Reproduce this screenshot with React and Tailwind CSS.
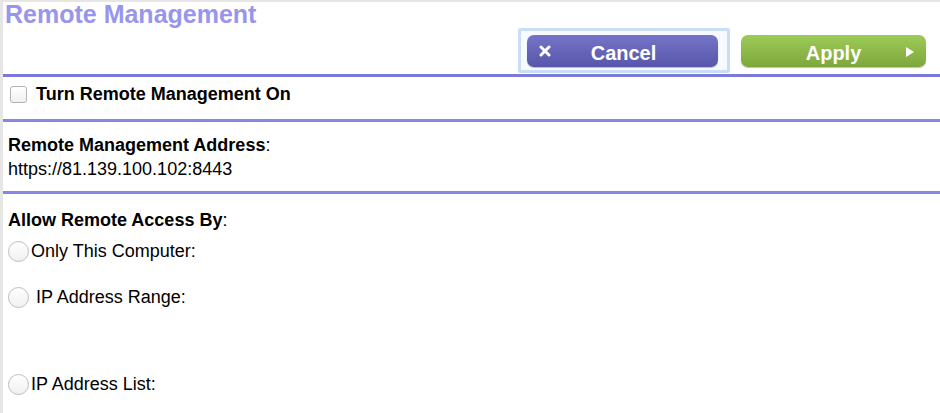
export default function App() {
  return (
    <div className="w-[940px] h-[413px] overflow-hidden bg-white border-t-2 border-l-[3px] border-[#e6e6e6] font-['Liberation_Sans',Arial,sans-serif] text-black">
      {/* Header */}
      <h1 className="text-[25px] leading-[25px] font-bold text-[#9896ec] pl-[2px]">
        Remote Management
      </h1>
      <div className="h-[47px] flex items-start justify-end pr-[14px]">
        <div className="mt-[1px] border-[3px] border-[#c9ddf5] rounded-[2px] bg-[#f7fbff] pl-[6px] pr-[9px] pt-[4px] pb-[3px]">
          <button className="relative w-[191px] h-[32px] rounded-[7px] bg-gradient-to-b from-[#7674c9] to-[#5856ab] text-white text-[20px] font-bold leading-[20px] pt-[4px] shadow-[0_1px_1px_rgba(0,0,0,0.25)]">
            <svg
              className="absolute left-[12px] top-[10px]"
              width="12"
              height="12"
              viewBox="0 0 12 12"
            >
              <path d="M2 2 L10 10 M10 2 L2 10" stroke="white" strokeWidth="3" strokeLinecap="round" />
            </svg>
            <span className="pl-[2px]">Cancel</span>
          </button>
        </div>
        <button className="relative ml-[11px] mt-[8px] w-[185px] h-[32px] rounded-[7px] bg-gradient-to-b from-[#9dcb58] to-[#7ea73b] text-white text-[20px] font-bold leading-[20px] pt-[4px] shadow-[0_1px_1px_rgba(0,0,0,0.25)]">
          Apply
          <svg
            className="absolute right-[12px] top-[12px]"
            width="8"
            height="10"
            viewBox="0 0 8 10"
          >
            <path d="M0 0 L8 5 L0 10 Z" fill="white" />
          </svg>
        </button>
      </div>
      <div className="h-[3px] bg-[#7b79dc]" />

      {/* Enable */}
      <div className="mt-[7px] h-[20px] flex items-center pl-[7px]">
        <span className="w-[17px] h-[17px] rounded-[3px] border border-[#b3b3b3] bg-gradient-to-b from-white to-[#f1f1f1]" />
        <span className="ml-[9px] text-[18px] leading-[20px] font-bold">
          Turn Remote Management On
        </span>
      </div>
      <div className="mt-[15px] h-[3px] bg-[#8886e0]" />

      {/* Address */}
      <div className="mt-[13px] pl-[5px] text-[18px] leading-[20px]">
        <div>
          <span className="font-bold">Remote Management Address</span>:
        </div>
        <div className="mt-[4px]">https://81.139.100.102:8443</div>
      </div>
      <div className="mt-[12px] h-[3px] bg-[#8886e0]" />

      {/* Access */}
      <div className="mt-[16px] pl-[5px] text-[18px] leading-[20px]">
        <span className="font-bold">Allow Remote Access By</span>:
      </div>
      <div className="mt-[11px] h-[20px] flex items-center pl-[5px] text-[18px] leading-[20px]">
        <span className="w-[21px] h-[21px] rounded-full border border-[#bdbdbd] bg-gradient-to-b from-white to-[#f0f0f0]" />
        <span className="ml-[2px]">Only This Computer:</span>
      </div>
      <div className="mt-[26px] h-[20px] flex items-center pl-[5px] text-[18px] leading-[20px]">
        <span className="w-[21px] h-[21px] rounded-full border border-[#bdbdbd] bg-gradient-to-b from-white to-[#f0f0f0]" />
        <span className="ml-[7px]">IP Address Range:</span>
      </div>
      <div className="mt-[67px] h-[20px] flex items-center pl-[5px] text-[18px] leading-[20px]">
        <span className="w-[21px] h-[21px] rounded-full border border-[#bdbdbd] bg-gradient-to-b from-white to-[#f0f0f0]" />
        <span className="ml-[2px]">IP Address List:</span>
      </div>
    </div>
  );
}
